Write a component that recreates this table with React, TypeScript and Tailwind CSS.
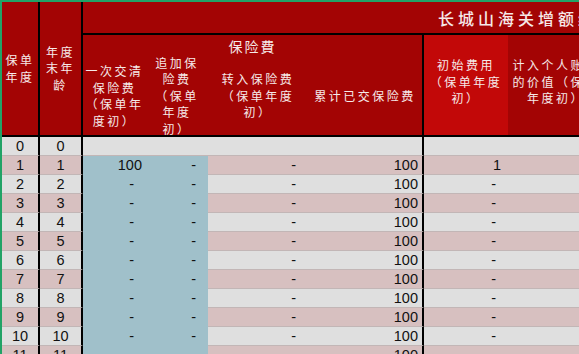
import React from 'react';

const GRID = 'grid grid-cols-[38px_43px_63px_62px_100px_116px_84px_96px]';
const CJK = "font-['Noto_Sans_CJK_SC',sans-serif]";
const head = `${CJK} text-[12px] leading-[16.5px] tracking-[2.5px] text-[#f6e9e9] text-center`;

const rows = Array.from({ length: 13 }, (_, i) => i);

function HeaderCell({ className, lines }: { className: string; lines: string[] }) {
  return (
    <div className={`flex items-center justify-center ${className}`}>
      <div className={head}>
        {lines.map((l, i) => (
          <div key={i}>{l}</div>
        ))}
      </div>
    </div>
  );
}

function DataRow({ n }: { n: number }) {
  const pink = n % 2 === 1;
  const bg = pink ? 'bg-[#d7c0c0]' : 'bg-[#dfdfdf]';
  const line = 'border-b border-[#c2b6b6]';
  const blue = n === 0 ? `${bg} ${line}` : 'bg-[#a0c0ca] border-b border-[#a0c0ca]';
  const num = 'justify-end pr-[4px]';
  const dash = 'justify-end pr-[12px]';
  return (
    <div className={`${GRID} h-[19px] font-['Liberation_Sans',Arial,sans-serif] text-[14.5px] text-[#111] leading-none`}>
      <div className={`flex items-center justify-center ${bg} ${line} border-r-2 border-r-black`}>{n}</div>
      <div className={`flex items-center justify-center ${bg} ${line} border-r-2 border-r-black`}>{n}</div>
      <div className={`flex items-center ${blue} ${n === 1 ? num : dash}`}>{n === 0 ? '' : n === 1 ? '100' : '-'}</div>
      <div className={`flex items-center ${blue} ${dash}`}>{n === 0 ? '' : '-'}</div>
      <div className={`flex items-center ${bg} ${line} ${dash}`}>{n === 0 ? '' : '-'}</div>
      <div className={`flex items-center ${bg} ${line} border-r-2 border-r-black ${num}`}>{n === 0 ? '' : '100'}</div>
      <div className={`flex items-center ${bg} ${line} ${n === 1 ? 'justify-end pr-[7px]' : dash}`}>{n === 0 ? '' : n === 1 ? '1' : '-'}</div>
      <div className={`${bg} ${line}`}></div>
    </div>
  );
}

export default function App() {
  return (
    <div className="w-[579px] h-[354px] overflow-hidden bg-[#dfdfdf] border-l-2 border-t-2 border-[#21a366]">
      <div className={`${GRID} grid-rows-[33px_22px_80px] bg-[#a30404]`}>
        <HeaderCell
          className="col-start-1 row-start-1 row-span-3 border-r-2 border-b-2 border-black"
          lines={['保单', '年度']}
        />
        <HeaderCell
          className="col-start-2 row-start-1 row-span-3 border-r-2 border-b-2 border-black"
          lines={['年度', '末年', '龄']}
        />
        <div className="col-start-3 col-span-6 row-start-1 flex items-center pl-[355px] border-b-2 border-black overflow-hidden">
          <span className={`${CJK} text-[16px] tracking-[4px] text-[#f6e9e9] whitespace-nowrap font-medium`}>
            长城山海关增额终身寿险
          </span>
        </div>
        <div className="col-start-3 col-span-4 row-start-2 flex items-center justify-center border-r-2 border-black">
          <span className={`${CJK} text-[14px] tracking-[2px] text-[#f6e9e9]`}>保险費</span>
        </div>
        <HeaderCell
          className="col-start-3 row-start-3 border-b-2 border-black"
          lines={['一次交清', '保险费', '（保单年', '度初）']}
        />
        <HeaderCell
          className="col-start-4 row-start-3 border-b-2 border-black"
          lines={['追加保', '险费', '（保单', '年度', '初）']}
        />
        <HeaderCell
          className="col-start-5 row-start-3 border-b-2 border-black"
          lines={['转入保险费', '（保单年度', '初）']}
        />
        <HeaderCell
          className="col-start-6 row-start-3 border-b-2 border-r-2 border-black"
          lines={['累计已交保险费']}
        />
        <HeaderCell
          className="col-start-7 row-start-2 row-span-2 border-b-2 border-black bg-[#c20808] pb-[6px]"
          lines={['初始费用', '（保单年度', '初）']}
        />
        <HeaderCell
          className="col-start-8 row-start-2 row-span-2 border-b-2 border-black pb-[6px]"
          lines={['计入个人账户', '的价值（保单', '年度初）']}
        />
      </div>
      {rows.map((n) => (
        <DataRow key={n} n={n} />
      ))}
    </div>
  );
}
